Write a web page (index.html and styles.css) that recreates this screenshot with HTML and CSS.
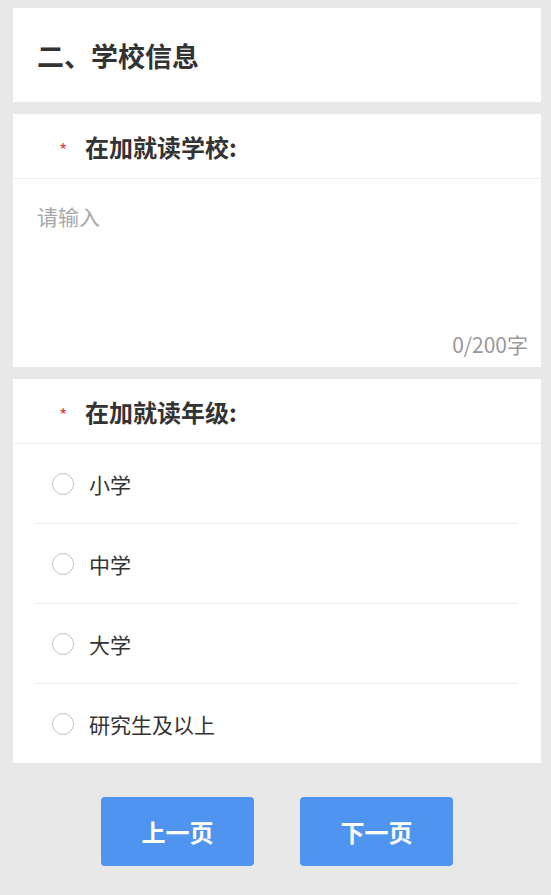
FILE: index.html
```html
<!DOCTYPE html>
<html lang="zh-CN">
<head>
<meta charset="utf-8">
<title>学校信息</title>
<link rel="stylesheet" href="styles.css">
</head>
<body>
<div class="page">
  <section class="card title-card">
    <h1 class="title">二、学校信息</h1>
  </section>

  <section class="card">
    <div class="q-head"><span class="star">*</span><span class="q-label">在加就读学校:</span></div>
    <div class="q-body">
      <textarea class="input" placeholder="请输入"></textarea>
      <div class="counter">0/200字</div>
    </div>
  </section>

  <section class="card">
    <div class="q-head"><span class="star">*</span><span class="q-label">在加就读年级:</span></div>
    <ul class="options">
      <li class="option"><span class="radio"></span><span class="opt-text">小学</span></li>
      <li class="option"><span class="radio"></span><span class="opt-text">中学</span></li>
      <li class="option"><span class="radio"></span><span class="opt-text">大学</span></li>
      <li class="option"><span class="radio"></span><span class="opt-text">研究生及以上</span></li>
    </ul>
  </section>

  <div class="actions">
    <button class="btn">上一页</button>
    <button class="btn">下一页</button>
  </div>
</div>
</body>
</html>
```

FILE: styles.css
```css
html, body {
  margin: 0;
  padding: 0;
  background: #e8e8e8;
}
body {
  font-family: "Noto Sans CJK SC", "Noto Sans", sans-serif;
  color: #333;
}
.page {
  padding: 8px 10px 0 13px;
  display: flex;
  flex-direction: column;
  gap: 12px;
}
.card {
  background: #fff;
}
.title-card {
  height: 94px;
  display: flex;
  align-items: center;
  padding-left: 24px;
}
.title {
  margin: 0;
  font-size: 27px;
  font-weight: 700;
  color: #333;
  line-height: 1;
}
.q-head {
  height: 64px;
  display: flex;
  align-items: center;
  border-bottom: 1px solid #ededed;
  padding-left: 46px;
}
.star {
  color: #e0473a;
  font-size: 18px;
  width: 26px;
  padding-top: 6px;
}
.q-label {
  font-size: 24px;
  font-weight: 700;
  color: #333;
}
.q-body {
  padding: 22px 13px 10px 24px;
  display: flex;
  flex-direction: column;
}
.input {
  border: none;
  outline: none;
  resize: none;
  padding: 0;
  margin: 0;
  height: 130px;
  font-family: "Noto Sans CJK SC", "Noto Sans", sans-serif;
  font-size: 21px;
  line-height: 30px;
  color: #333;
  background: transparent;
}
.input::placeholder {
  color: #a8a8a8;
}
.counter {
  text-align: right;
  font-size: 21px;
  line-height: 26px;
  color: #999;
}
.options {
  list-style: none;
  margin: 0 23px;
  padding: 0;
}
.option {
  height: 79px;
  display: flex;
  align-items: center;
  padding-left: 16px;
  border-bottom: 1px solid #ededed;
}
.option:last-child {
  border-bottom: none;
  height: 79px;
}
.radio {
  width: 20px;
  height: 20px;
  border: 1.5px solid #c4c4c4;
  border-radius: 50%;
  flex: none;
}
.opt-text {
  margin-left: 15px;
  font-size: 21px;
  color: #333;
}
.actions {
  display: flex;
  justify-content: center;
  gap: 46px;
  padding-top: 22px;
}
.btn {
  width: 153px;
  height: 69px;
  border: none;
  border-radius: 4px;
  background: #4f94ef;
  color: #fff;
  font-family: "Noto Sans CJK SC", "Noto Sans", sans-serif;
  font-size: 24px;
  font-weight: 700;
  padding: 0;
}
```
